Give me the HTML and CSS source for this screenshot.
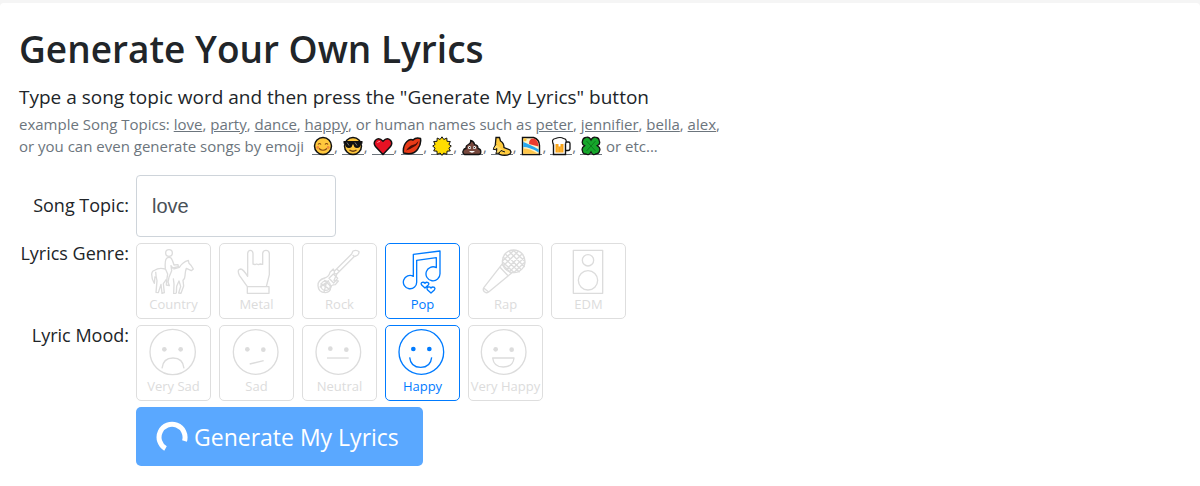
FILE: index.html
```html
<!DOCTYPE html>
<html lang="en">
<head>
    <meta charset="UTF-8">
    <meta name="viewport" content="width=device-width, initial-scale=1.0">
    <title>Generate Your Own Lyrics</title>
    <link rel="stylesheet" href="styles.css">
</head>
<body>
    <main class="panel">
        <h1>Generate Your Own Lyrics</h1>
        <p class="lead">Type a song topic word and then press the "Generate My Lyrics" button</p>
        <p class="examples">
            example Song Topics: <a href="#love">love</a>, <a href="#party">party</a>, <a href="#dance">dance</a>, <a href="#happy">happy</a>, or human names such as <a href="#peter">peter</a>, <a href="#jennifier">jennifier</a>, <a href="#bella">bella</a>, <a href="#alex">alex</a>,<br>
            or you can even generate songs by emoji
            <a class="emoji" href="#smile" aria-label="smile"><svg viewBox="0 0 20 20"><circle cx="10" cy="10" r="8.5" fill="#ffc83d" stroke="#111" stroke-width="1.5"/><g fill="none" stroke="#8a4b12" stroke-width="1.2"><path d="M5 8.5q1.5-2 3 0M12 8.5q1.5-2 3 0M6 12.5q4 3.5 8 0"/></g><circle cx="4.8" cy="11.5" r="1.4" fill="#f28a3c"/><circle cx="15.2" cy="11.5" r="1.4" fill="#f28a3c"/></svg></a>,
            <a class="emoji" href="#cool" aria-label="cool"><svg viewBox="0 0 20 20"><circle cx="10" cy="10" r="8.5" fill="#ffc83d" stroke="#111" stroke-width="1.5"/><path d="M.5 5h19v2.5l-1.500.5q-.5 4-4 4-3 0-3.500-3.500h-1Q9 12 6 12q-3.500 0-4-4L.5 7.500z" fill="#111"/><path d="M4 6.500l2 3M12 6.500l2 3" stroke="#777"/><path d="M6.500 14q3.500 2.500 7 0" fill="none" stroke="#6b3d10" stroke-width="1.300"/></svg></a>,
            <a class="emoji" href="#heart" aria-label="heart"><svg viewBox="0 0 20 20"><path d="M10 18.500L2.500 10.500Q0 7 2.500 4.200 6 1 10 5.200 14 1 17.500 4.200 20 7 17.500 10.500z" fill="#e81224" stroke="#111" stroke-width="1.500"/><path d="M4.500 7q.5-2 2.500-1.500" fill="none" stroke="#ff8d94"/></svg></a>,
            <a class="emoji" href="#kiss" aria-label="kiss"><svg viewBox="0 0 20 20"><path d="M1.500 17Q.5 10 5 5.500 8 2.500 11 4q3-3 7.500-1.500 1 6-3 11Q11 19.500 1.500 17z" fill="#e93b18" stroke="#111" stroke-width="1.500"/><path d="M4 14.500q3.500-5 6.500-5.500Q14 8.500 16.500 5q-1 4.500-5 6Q8 13.500 4 14.500z" fill="#4d0d06"/></svg></a>,
            <a class="emoji" href="#sun" aria-label="sun"><svg viewBox="0 0 20 20"><path d="M10 .8l1.800 2.700L14.800 2l.2 3.300 3.300.200-1.400 2.900 2.400 1.700-2.400 2 1.400 2.800-3.300.300-.200 3.200-3-1.400-1.800 2.400-1.900-2.400-2.900 1.400-.200-3.200-3.300-.300 1.400-2.800-2.400-2 2.400-1.700-1.400-2.900 3.300-.200L5.200 2l2.900 1.500z" fill="#ffdc00" stroke="#111" stroke-width="1"/></svg></a>,
            <a class="emoji" href="#poo" aria-label="poo"><svg viewBox="0 0 20 20"><path d="M2.500 18.500Q0 17 1.300 14.500 2 12.500 4 12.500 3.500 9.500 6.300 8.500 9 7.500 8.700 4.500q3 .5 4 4.200 3.500.5 3.300 3.800 3 .5 2.800 3.500 0 2.500-2.300 2.500z" fill="#77483d" stroke="#111" stroke-width="1.300"/><circle cx="7.500" cy="11.500" r="1.500" fill="#fff"/><circle cx="12.500" cy="11.500" r="1.500" fill="#fff"/><circle cx="7.700" cy="11.600" r=".7"/><circle cx="12.300" cy="11.600" r=".7"/><path d="M7 15h6q-3 3.500-6 0z" fill="#fff"/></svg></a>,
            <a class="emoji" href="#banana" aria-label="banana"><svg viewBox="0 0 20 20"><path d="M4 1.500h3.500l1 3.500q3.500 2 3.500 6.500l6 2.500 1 2-1 2q-5 2.300-10.500.300Q2.500 14 3.500 7z" fill="#ffcb3d" stroke="#111" stroke-width="1.300"/><path d="M4 8.500Q1.500 11 1.300 13.500q2.200.500 3.500-1 .2 3-1 5 4 .5 5.200-3l4 1.500" fill="#ffdb66" stroke="#111"/></svg></a>,
            <a class="emoji" href="#beach" aria-label="beach"><svg viewBox="0 0 20 20"><path d="M1.500 1.500h11q6 2 6 8v9h-17z" fill="#fff3c8" stroke="#111" stroke-width="1.400"/><path d="M2.200 6q6 2 15.600 7.500v3Q9 11 2.200 11z" fill="#27a7ee"/><path d="M2.200 12.500q7 0 14.800 5.300H2.200z" fill="#ffc64a"/><path d="M8 8q0-6 5-5.500 4.500 1.500 4.500 8z" fill="#ed3b2f"/><circle cx="4" cy="3.700" r="1.600" fill="#ffc83d"/></svg></a>,
            <a class="emoji" href="#beer" aria-label="beer"><svg viewBox="0 0 20 20"><path d="M14 6h3.500q1.500 0 1.500 1.500v5q0 2-2 2h-3" fill="#fff" stroke="#111" stroke-width="1.300"/><path d="M2.500 7v11.500h12V5" fill="#fff" stroke="#111" stroke-width="1.400"/><path d="M4.500 8h8v8.500h-8z" fill="#f9a51a"/><path d="M7 11v5M10 11v5" stroke="#fdbb45"/><path d="M2.500 8.500Q-.2 3 4.500 2.500q5-2 8 0 4 .5 2 5H9.500v3H7.500v-3z" fill="#fff"/><path d="M2.500 8.500Q-.2 3 4.500 2.500q5-2 8 0 4 .5 2 5" fill="none" stroke="#111" stroke-width="1.200"/></svg></a>,
            <a class="emoji" href="#clover" aria-label="clover"><svg viewBox="0 0 20 20"><path d="M10 4q2-4 5.500-2.500Q18 2 18.300 5q1.400 3-2 4.700 3.500 2 2.300 5-.6 3.300-4 3.300Q12 20 10 16q-2 4-5 2-3.300 0-3.600-3.300-1.200-3 2.200-5Q.4 8 1.500 5 2 2 4.500 1.500 8 0 10 4z" fill="#16a62b" stroke="#111" stroke-width="1.300"/><path d="M5.500 5l9 10M14.500 5l-9 10" stroke="#0c7a1c"/></svg></a>
            or etc...
        </p>

        <form class="lyrics-form">
            <label class="row-label topic-label" for="topic">Song Topic:</label>
            <input class="topic" id="topic" type="text" value="love">

            <span class="row-label" id="genre-label">Lyrics Genre:</span>
            <div class="cards" role="radiogroup" aria-labelledby="genre-label">
                <label class="card">
                    <input type="radio" name="genre" value="country">
                    <svg viewBox="0 0 153 144">
                        <circle cx="63" cy="21" r="10"/>
                        <path d="M52 68Q50 42 56 37q7-6 14 0 4 6 8 20l12-1 1 6-17 4-5-7 2 15-8 20-3 14 4 11-9-2 1-13 3-20z"/>
                        <path d="M76 69l18-5q10-16 27-21l2 9q8 7 13 17l-6 5-15-7q-3 8-4 22 0 9-6 14l2 17-8 22-7-1 6-20-5-16-7 16-1 20-8 3 1-30-2-17M52 69q-20-5-32 4-8 1-9 12 0 16 8 27l2-21M23 77q1 17 4 27l-3 35 7 1 8-25 3 27 7-2-3-27 9-13"/>
                    </svg>
                    <span>Country</span>
                </label>
                <label class="card">
                    <input type="radio" name="genre" value="metal">
                    <svg viewBox="0 0 153 144">
                        <path d="M49 122h65v20H49zM49 122L25 88q-8-18 4-19 8 1 21 22V22q1-9 8-9t8 9v32l6 2 5-2 5 2 6-2 7 1V22q1-9 10-9t10 9v64l-9 36"/>
                    </svg>
                    <span>Metal</span>
                </label>
                <label class="card">
                    <input type="radio" name="genre" value="rock">
                    <svg viewBox="0 0 153 144">
                        <path d="M61 76l52-52 4-9q11-5 18 2 1 9-9 13l-6 2-51 51M116 27l6 6M69 70l8 7"/>
                        <path d="M61 76l-3-7-10 10q-4 14-16 17-21 6-20 23 1 20 22 21 16-1 16-17 1-6 14-7l9-11-13-2 9-20-8 1z"/>
                        <path d="M31 102l22 22M20 112l27 18M17 124l28-20M30 139l8-32M45 97l14 14 12-14-13-13z"/>
                        <circle cx="35" cy="119" r="14"/>
                    </svg>
                    <span>Rock</span>
                </label>
                <label class="card">
                    <input type="radio" name="genre" value="pop" checked>
                    <svg viewBox="0 0 153 144">
                        <path d="M49 91V25l80-10v68a21 21 0 1 1-11-18V35l-59 8v64a20 20 0 1 1-10-16z"/>
                        <path d="M84 126l-10-9q-4-6 2-8 5-1 8 3 4-5 9-2 5 3 0 8zM102 141l-10-9q-5-7 2-9 5-1 8 3 4-5 10-2 4 4 0 8z"/>
                    </svg>
                    <span>Pop</span>
                </label>
                <label class="card">
                    <input type="radio" name="genre" value="rap">
                    <svg viewBox="0 0 153 144">
                        <circle cx="101" cy="46" r="34"/>
                        <path d="M68 52L12 124q-5 7 1 13 5 6 13 1l70-58M60 64l25 26M66 55l28 27M11 126l15 12"/>
                        <path d="M76 24l48 47M87 16l47 47M100 13l34 33M69 33l50 46M67 47l36 33M126 24L78 71M134 34L87 78M115 16L69 60M102 13L68 44M135 48l-34 32"/>
                    </svg>
                    <span>Rap</span>
                </label>
                <label class="card">
                    <input type="radio" name="genre" value="edm">
                    <svg viewBox="0 0 153 144">
                        <path d="M31 13h88v129H31z"/>
                        <circle cx="75" cy="43" r="17"/>
                        <circle cx="75" cy="103" r="29"/>
                    </svg>
                    <span>EDM</span>
                </label>
            </div>

            <span class="row-label" id="mood-label">Lyric Mood:</span>
            <div class="cards" role="radiogroup" aria-labelledby="mood-label">
                <label class="card">
                    <input type="radio" name="mood" value="very-sad">
                    <svg viewBox="0 0 153 144">
                        <circle cx="74" cy="72" r="68"/>
                        <circle class="eye" cx="49" cy="64" r="7"/>
                        <circle class="eye" cx="98" cy="64" r="7"/>
                        <path d="M42 121q3-31 33-31t33 31"/>
                    </svg>
                    <span>Very Sad</span>
                </label>
                <label class="card">
                    <input type="radio" name="mood" value="sad">
                    <svg viewBox="0 0 153 144">
                        <circle cx="74" cy="72" r="67"/>
                        <circle class="eye" cx="49" cy="64" r="7"/>
                        <circle class="eye" cx="97" cy="65" r="7"/>
                        <path d="M56 108l42-10"/>
                    </svg>
                    <span>Sad</span>
                </label>
                <label class="card">
                    <input type="radio" name="mood" value="neutral">
                    <svg viewBox="0 0 153 144">
                        <circle cx="73" cy="72" r="67"/>
                        <circle class="eye" cx="49" cy="62" r="7"/>
                        <circle class="eye" cx="97" cy="65" r="7"/>
                        <path d="M39 90h65"/>
                    </svg>
                    <span>Neutral</span>
                </label>
                <label class="card">
                    <input type="radio" name="mood" value="happy" checked>
                    <svg viewBox="0 0 153 144">
                        <circle cx="73" cy="72" r="67"/>
                        <circle class="eye" cx="49" cy="63" r="7"/>
                        <circle class="eye" cx="97" cy="63" r="7"/>
                        <path d="M38 88q3 30 33 30t33-30"/>
                    </svg>
                    <span>Happy</span>
                </label>
                <label class="card">
                    <input type="radio" name="mood" value="very-happy">
                    <svg viewBox="0 0 153 144">
                        <circle cx="71" cy="72" r="67"/>
                        <circle class="eye" cx="47" cy="64" r="7"/>
                        <circle class="eye" cx="95" cy="65" r="7"/>
                        <path d="M38 90h64q-3 27-32 27T38 90z"/>
                    </svg>
                    <span>Very Happy</span>
                </label>
            </div>

            <button class="generate" type="button">
                <svg class="spinner" viewBox="0 0 32 32"><path d="M9.500 27.500A13 13 0 1 1 28.500 20"/></svg>
                Generate My Lyrics
            </button>
        </form>
    </main>
</body>
</html>
```
FILE: styles.css
```css
* { box-sizing: border-box; }

body {
    margin: 0;
    padding-top: 3px;
    background-color: #f5f5f5;
    color: #212529;
    font-family: "Open Sans", "Noto Sans", sans-serif;
    font-size: 18px;
    line-height: 28px;
}

.panel {
    min-height: calc(100vh - 3px);
    padding: 22px 19px 20px;
    background-color: #fff;
    border-radius: 4px 4px 0 0;
}

h1 {
    margin: 0 0 9px;
    font-size: 37px;
    font-weight: 600;
    line-height: 48px;
}

p { margin: 0; }

.lead {
    margin-bottom: 1px;
    font-size: 19px;
    line-height: 30px;
}

.examples {
    margin-bottom: 18px;
    color: #6c757d;
    font-size: 15px;
    line-height: 22px;
}

.examples a { color: inherit; }

.examples .emoji {
    display: inline-flex;
    justify-content: center;
    width: 22px;
    height: 20px;
    vertical-align: -4px;
    background: linear-gradient(#6c757d, #6c757d) 0 18px / 100% 1px no-repeat;
}

.examples br + .emoji {
    margin-left: 4px;
}

.emoji svg {
    width: 20px;
    height: 20px;
}

.lyrics-form {
    display: grid;
    grid-template-columns: 110px 1fr;
    gap: 6px 7px;
}

.row-label {
    justify-self: end;
    line-height: 20px;
    white-space: nowrap;
}

.topic-label {
    align-self: center;
    padding-bottom: 2px;
}

.topic {
    width: 200px;
    height: 62px;
    padding: 0 15px;
    border: 1px solid #ced4da;
    border-radius: 4px;
    color: #495057;
    font-family: "Liberation Sans", sans-serif;
    font-size: 20px;
}

.cards {
    display: flex;
    flex-wrap: wrap;
    gap: 8px;
}

.card {
    position: relative;
    display: flex;
    flex-direction: column;
    align-items: center;
    width: 75px;
    height: 76px;
    padding-top: 2px;
    border: 1px solid #dedede;
    border-radius: 5px;
    color: #dcdcdc;
    font-size: 13px;
    line-height: 20px;
    white-space: nowrap;
    cursor: pointer;
}

.card input {
    position: absolute;
    opacity: 0;
}

.card svg {
    width: 51px;
    height: 48px;
    fill: none;
    stroke: currentColor;
    stroke-width: 4;
    stroke-linejoin: round;
}

.card .eye {
    fill: currentColor;
    stroke: none;
}

.card:has(:checked) {
    border-color: #007bff;
    color: #007bff;
}

.generate {
    grid-column: 2;
    justify-self: start;
    display: flex;
    align-items: center;
    gap: 6px;
    height: 59px;
    padding: 0 24px 0 20px;
    border: 0;
    border-radius: 5px;
    background-color: #5aa8ff;
    color: #fff;
    font-family: inherit;
    font-size: 23px;
}

.spinner {
    width: 32px;
    height: 32px;
    fill: none;
    stroke: #fff;
    stroke-width: 5;
}
```
